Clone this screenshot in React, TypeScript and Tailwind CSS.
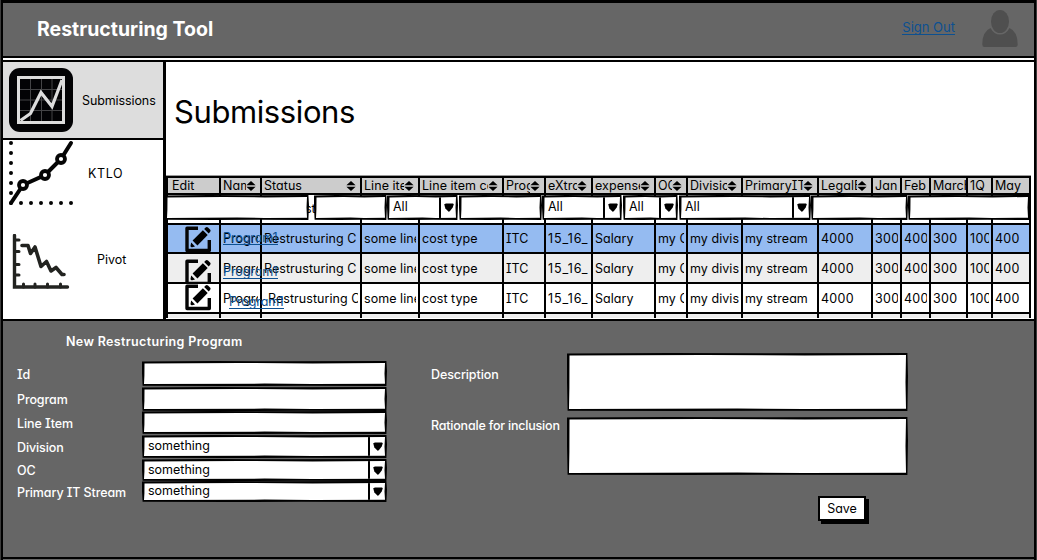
import React from 'react';

const COLS =
  'grid grid-cols-[53px_41px_100px_58px_84px_42px_47px_63px_32px_55px_76px_54px_29px_29px_37px_25px_38px]';

const HEAD: { label: string; sort?: boolean }[] = [
  { label: 'Edit' },
  { label: 'Name', sort: true },
  { label: 'Status', sort: true },
  { label: 'Line item', sort: true },
  { label: 'Line item cost', sort: true },
  { label: 'Program', sort: true },
  { label: 'eXtra', sort: true },
  { label: 'expense', sort: true },
  { label: 'OC', sort: true },
  { label: 'Division', sort: true },
  { label: 'PrimaryIT', sort: true },
  { label: 'LegalEntity', sort: true },
  { label: 'Jan' },
  { label: 'Feb' },
  { label: 'March' },
  { label: '1Q' },
  { label: 'May' },
];

const ROW = [
  '', 'Program1', 'Restrusturing C', 'some line', 'cost type', 'ITC', '15_16_', 'Salary', 'my OC',
  'my division', 'my stream', '4000', '300', '400', '300', '100', '400',
];

const WOBBLE_OUT =
  '[clip-path:polygon(0_0.5px,30%_0,60%_0.3px,calc(100%-0.6px)_0,100%_40%,calc(100%-0.6px)_100%,65%_calc(100%-0.3px),35%_100%,0.6px_calc(100%-0.3px),0_50%)]';
const WOBBLE_IN =
  '[clip-path:polygon(0.5px_0.4px,40%_0,70%_0.4px,100%_0,calc(100%-0.5px)_50%,100%_calc(100%-0.3px),70%_100%,50%_calc(100%-0.4px),0_100%,0.4px_60%)]';

function Box({ className = '', children }: { className?: string; children?: React.ReactNode }) {
  return (
    <div className={`shrink-0 bg-black p-[2px] ${WOBBLE_OUT} ${className}`}>
      <div className={`flex h-full bg-white ${WOBBLE_IN}`}>{children}</div>
    </div>
  );
}

function Select({ value, className = '' }: { value: string; className?: string }) {
  return (
    <Box className={className}>
      <span className="mt-[-1px] flex-1 self-center pl-[4px] text-[12.5px] leading-[16px] text-black">{value}</span>
      <span className="flex w-[17px] items-center justify-center border-l-2 border-black">
        <svg width="10" height="9" viewBox="0 0 10 9">
          <path d="M.2 1.2 2 .6 9 .5l.8.7-1.1 3.400L5.800 8.300 4.600 8.700 1.400 5.400Z" />
        </svg>
      </span>
    </Box>
  );
}

function SortIcon() {
  return (
    <svg width="10" height="10" viewBox="0 0 10 10" className="mr-[3px] shrink-0">
      <path d="M5 0 9.600 4.300H.4ZM.4 5.700h9.200L5 10Z" />
    </svg>
  );
}

function EditIcon() {
  return (
    <svg width="26" height="27" viewBox="0 0 26 27">
      <path
        d="M13 2.300H2v22.200h22.300V14"
        fill="none"
        stroke="#050505"
        strokeWidth="3.400"
        strokeLinejoin="round"
      />
      <path d="M6.200 16.600 10 20.400 7.200 21.200Q5.300 21.600 5.500 19.800Z" />
      <path d="M7.600 14.600 17.900 4.300 22.700 9.100 12.400 19.400Z" />
      <path d="M19.200 3 20.600 1.600Q21.800.5 23 1.600L25 3.600Q26.100 4.800 25 6L23.700 7.400Z" />
    </svg>
  );
}

function BoardIcon() {
  return (
    <svg width="64" height="64" viewBox="0 0 64 64">
      <rect width="64" height="64" rx="11" fill="#030305" />
      <rect x="9.500" y="9.500" width="45" height="45" fill="none" stroke="#ddd" strokeWidth="3" />
      <path d="M21.500 11v42M32.500 11v42M43 11v42M11 21.500h42M11 32h42M11 42.500h42" stroke="#444446" strokeWidth="1" />
      <path d="M11.500 52.500 21.500 45.500 32 24.500 43 38.500 53 12" fill="none" stroke="#ddd" strokeWidth="3.200" />
    </svg>
  );
}

function DotsIcon() {
  return (
    <svg width="66" height="66" viewBox="0 0 66 66">
      <path
        d="M3 3v60M3 63h62"
        fill="none"
        stroke="#050505"
        strokeWidth="4"
        strokeLinecap="round"
        strokeDasharray="0 10"
      />
      <path d="M3 63 15 45 37 35 53 19 63 3" fill="none" stroke="#050505" strokeWidth="4" strokeLinecap="round" />
      <g fill="#fff" stroke="#050505" strokeWidth="3.800">
        <circle cx="15" cy="45" r="4" />
        <circle cx="37" cy="35" r="4" />
        <circle cx="53" cy="19" r="4" />
      </g>
    </svg>
  );
}

function DeclineIcon() {
  return (
    <svg width="58" height="56" viewBox="0 0 58 56" fill="none" stroke="#222320" strokeLinecap="round">
      <path d="M2.500 1.500v51.500h53" strokeWidth="3.400" />
      <path d="M3 6h4M3 17.500h4M3 30.500h4M3 41h4M11.500 53v-3M23 53v-3M35.500 53v-3M48.500 53v-3" strokeWidth="3" />
      <path
        d="M10 11.500h6l2.500 8 4.500-6.500 6 19.500 5.500-5 4.500 9.500 5-3.500 6 7h2"
        strokeWidth="3.600"
        strokeLinejoin="round"
      />
    </svg>
  );
}

function UserIcon() {
  return (
    <svg width="36" height="38" viewBox="0 0 36 38" fill="#4f4f4f">
      <ellipse cx="18" cy="11.500" rx="9" ry="11.500" />
      <path d="M8.500 18Q12 24.600 18 24.600T27.500 18Q35.700 21.500 35.700 34.500 35.700 37 33.500 37h-31Q.300 37 .300 34.500.300 21.500 8.500 18Z" />
    </svg>
  );
}

function HeaderRow() {
  return (
    <div className={`${COLS} h-[15px] bg-[#ccc]`}>
      {HEAD.map((h, i) => (
        <div
          key={i}
          className={`flex h-[15px] min-w-0 items-center border-r-2 border-black ${i === 0 ? 'pl-[4px]' : 'pl-[2px]'} ${h.sort ? 'pr-px' : ''}`}
        >
          <span className="mt-px min-w-0 flex-1 overflow-hidden text-[12.5px] leading-[16px] tracking-[0.05px] whitespace-nowrap">
            {h.label}
          </span>
          {h.sort && <SortIcon />}
        </div>
      ))}
    </div>
  );
}

function BodyRow({ className, indent = false }: { className: string; indent?: boolean }) {
  return (
    <div className={`${COLS} ${className}`}>
      {ROW.map((t, i) => (
        <div key={i} className="flex min-w-0 items-center border-r-2 border-black px-[2px]">
          <span
            className={`mt-px min-w-0 flex-1 overflow-hidden text-[12.5px] leading-[18px] whitespace-nowrap ${i === 6 ? 'tracking-[0.9px]' : i >= 11 ? 'tracking-[0.3px]' : 'tracking-[0.05px]'} ${indent && i === 2 ? 'pl-[4px]' : ''}`}
          >
            {t}
          </span>
        </div>
      ))}
    </div>
  );
}

function EmptyRow({ className }: { className: string }) {
  return (
    <div className={`${COLS} ${className}`}>
      {ROW.map((_, i) => (
        <div key={i} className="border-r-2 border-black" />
      ))}
    </div>
  );
}

function ProgramLink({ className }: { className: string }) {
  return (
    <a className={`absolute border-b border-[#0c5091] text-[12.5px] leading-[13px] tracking-[-0.1px] text-[#0c5091] ${className}`}>Program1</a>
  );
}

function Field({ label, className, children }: { label: string; className: string; children: React.ReactNode }) {
  return (
    <div className={`flex items-center ${className}`}>
      <label className="mt-[2px] w-[125px] shrink-0 text-[12.5px] leading-[16px] font-medium tracking-[-0.1px] whitespace-nowrap text-white">
        {label}
      </label>
      {children}
    </div>
  );
}

export default function App() {
  return (
    <div className="h-[560px] w-[1037px] overflow-hidden border-r border-l border-[#3c3c3c] [font-family:Inter,'Liberation_Sans',sans-serif] [font-feature-settings:'cv11','cv08']">
      <div className="flex h-[560px] flex-col border-r-2 border-l-2 border-black bg-[#666]">
        <header className="flex h-[58px] shrink-0 items-start border-t-[3px] border-b-2 border-black bg-[#666]">
          <h1 className="mt-[12px] ml-[34px] text-[19.5px] leading-[28px] font-bold text-white">Restructuring Tool</h1>
          <a className="mt-[17px] ml-auto border-b border-[#0c5091] text-[13px] leading-[14px] text-[#0c5091]">Sign Out</a>
          <div className="mt-[7px] mr-[16px] ml-[27px]">
            <UserIcon />
          </div>
        </header>

        <div className="h-[2px] shrink-0 bg-white" />
        <div className="flex h-[259px] shrink-0 border-t-2 border-black bg-white">
          <nav className="flex w-[163px] shrink-0 flex-col border-r-[3px] border-black">
            <div className="flex h-[78px] shrink-0 items-start border-b-2 border-black bg-[#ddd] pt-[6px] pl-[6px]">
              <BoardIcon />
              <span className="mt-[25px] ml-[9px] text-[12.5px] leading-[16px] tracking-[-0.1px]">Submissions</span>
            </div>
            <div className="flex h-[68px] shrink-0 items-start pt-0 pl-[5px]">
              <DotsIcon />
              <span className="mt-[26px] ml-[14px] text-[12.5px] leading-[16px] tracking-[0.6px]">KTLO</span>
            </div>
            <div className="mt-[26px] flex items-start pl-[9px]">
              <DeclineIcon />
              <span className="mt-[18px] ml-[27px] text-[12.5px] leading-[16px]">Pivot</span>
            </div>
          </nav>

          <main className="flex min-w-0 flex-1 flex-col">
            <div className="h-[113px] shrink-0 pt-[30px] pl-[8px]">
              <h2 className="text-[31px] leading-[40px] tracking-[-0.4px]">Submissions</h2>
            </div>
            <div className="h-px w-[865px] shrink-0 bg-[#999]" />
            <div className="relative w-[865px] shrink-0 border-t-2 border-l-2 border-black">
              <HeaderRow />
              <div className="h-[2px] bg-black" />
              <EmptyRow className="h-[28px] bg-white" />
              <div className="h-[2px] bg-black" />
              <BodyRow className="h-[27px] bg-[#95bbf1]" />
              <div className="h-[2px] bg-black" />
              <BodyRow className="h-[28px] bg-[#eee]" />
              <div className="h-[2px] bg-black" />
              <BodyRow className="h-[28px] bg-white" indent />
              <div className="h-[2px] bg-black" />
              <EmptyRow className="h-[4px] bg-[#eee]" />

              <span className="absolute top-[23px] left-[137px] text-[12.5px] leading-[16px]">st</span>
              <div className="absolute top-[17px] left-[-3px] flex h-[25px] w-[866px]">
                <Box className="w-[144px]" />
                <Box className="ml-[5px] w-[73px]" />
                <Select value="All" className="w-[71px]" />
                <Box className="ml-px w-[83px]" />
                <Select value="All" className="w-[80px]" />
                <Select value="All" className="ml-px w-[55px]" />
                <Select value="All" className="ml-px w-[132px]" />
                <Box className="w-[97px]" />
                <Box className="w-[122px]" />
              </div>

              <div className="absolute top-[48px] left-[17px]"><EditIcon /></div>
              <div className="absolute top-[81px] left-[17px] h-[25px] overflow-hidden"><EditIcon /></div>
              <div className="absolute top-[106px] left-[17px]"><EditIcon /></div>
              <ProgramLink className="top-[53px] left-[55px]" />
              <ProgramLink className="top-[87px] left-[55px]" />
              <ProgramLink className="top-[117px] left-[61px]" />
            </div>
          </main>
        </div>

        <section className="flex h-[240px] shrink-0 border-t-2 border-b-2 border-black bg-[#666]">
          <div className="w-[414px] shrink-0 pl-[14px]">
            <h3 className="mt-[13px] ml-[49px] text-[12.5px] leading-[16px] font-semibold tracking-[0.35px] text-white">
              New Restructuring Program
            </h3>
            <div className="mt-[11px] flex flex-col">
              <Field label="Id" className="h-[25px]"><Box className="h-[25px] w-[245px]" /></Field>
              <Field label="Program" className="mt-px h-[24px]"><Box className="h-[24px] w-[245px]" /></Field>
              <Field label="Line Item" className="h-[23px]"><Box className="h-[23px] w-[245px]" /></Field>
              <Field label="Division" className="mt-px h-[23px]"><Select value="something" className="h-[23px] w-[245px]" /></Field>
              <Field label="OC" className="mt-px h-[22px]"><Select value="something" className="h-[22px] w-[245px]" /></Field>
              <Field label="Primary IT Stream" className="h-[21px]"><Select value="something" className="h-[21px] w-[245px]" /></Field>
            </div>
          </div>
          <div className="flex w-[495px] shrink-0 flex-col pt-[32px] pl-[14px]">
            <div className="flex items-start">
              <label className="mt-[14px] w-[136px] shrink-0 text-[12.5px] leading-[16px] font-medium tracking-[-0.1px] whitespace-nowrap text-white">
                Description
              </label>
              <Box className="h-[58px] w-[341px]" />
            </div>
            <div className="mt-[6px] flex items-start">
              <label className="mt-px w-[136px] shrink-0 text-[12.5px] leading-[16px] font-medium tracking-[-0.2px] whitespace-nowrap text-white">
                Rationale for inclusion
              </label>
              <Box className="h-[58px] w-[341px]" />
            </div>
            <button className="mt-[21px] ml-[387px] h-[25px] w-[48px] border-2 border-black bg-white text-[12.5px] leading-[20px] shadow-[3px_3px_0_#000]">
              Save
            </button>
          </div>
        </section>
      </div>
    </div>
  );
}
